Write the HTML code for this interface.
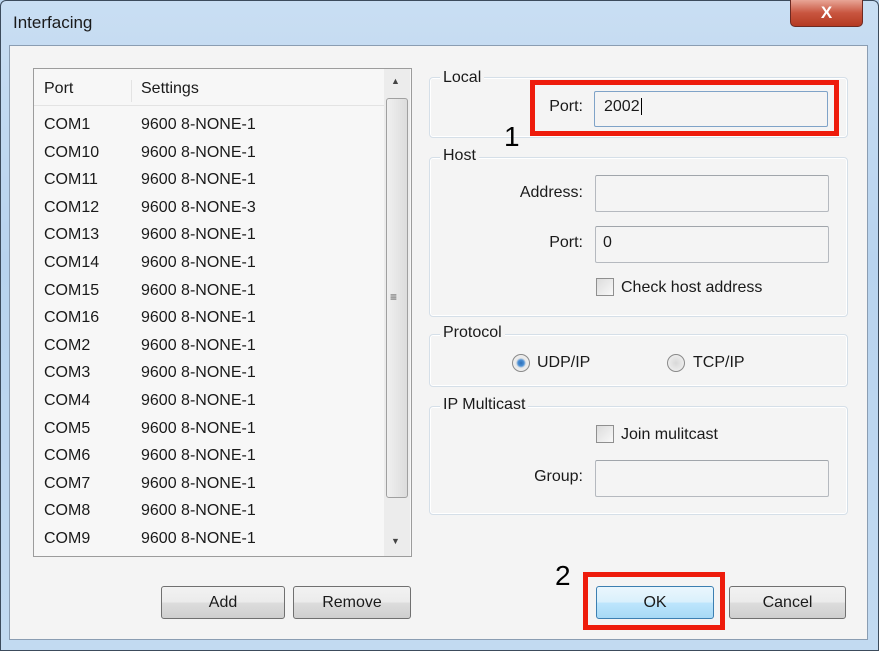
<!DOCTYPE html>
<html><head><style>
*{margin:0;padding:0;box-sizing:border-box}
body{width:879px;height:651px;overflow:hidden;position:relative;background:#bcd6ef;font-family:"Liberation Sans",sans-serif;font-size:16px;color:#1a1a1a}
.a{position:absolute}
.frame{left:0;top:0;width:879px;height:651px;border:1px solid #3c4b5c;border-radius:6px 6px 0 0;background:linear-gradient(180deg,#c9def3,#b8d3ee 40%,#c2daf1)}
.body{left:9px;top:45px;width:859px;height:595px;background:#f4f4f4;border:1px solid #8a9db2}
.grp{border:1px solid #d5dfe8;border-radius:4px;box-shadow:inset 0 0 0 1px #fff}
.gl{background:#f4f4f4;padding:0 3px;position:absolute;top:-11px;left:10px}
.inp{border:1px solid #b5b9bf;border-top-color:#a0a5ab;border-radius:2px;background:#f4f4f4}
.btn{border:1px solid #707070;border-radius:3px;background:linear-gradient(#f2f2f2,#ebebeb 50%,#dddddd 50%,#cfcfcf);text-align:center;line-height:30px}
.red{border:5px solid #ee1c0c}
.chk{width:18px;height:18px;border:1px solid #8f8f8f;background:linear-gradient(135deg,#dcdcdc,#f8f8f8)}
.lbl{position:absolute;text-align:right;width:120px}
</style></head><body>
<div class="a frame"></div>
<div class="a" style="left:13px;top:13px;font-size:17px">Interfacing</div>
<div class="a" style="left:790px;top:0;width:73px;height:27px;border:1px solid #6d2a22;border-top:none;border-radius:0 0 5px 5px;background:linear-gradient(#e8a596,#c8553f 50%,#b53a22);color:#fff;text-align:center;font-weight:bold;font-size:17px;line-height:26px">X</div>
<div class="a body"></div>

<div class="a" style="left:33px;top:68px;width:379px;height:489px;background:#f7f7f7;border:1px solid #9c9c9c"></div>
<div class="a" style="left:34px;top:105px;width:350px;height:1px;background:#e3e3e3"></div>
<div class="a" style="left:131px;top:80px;width:1px;height:22px;background:#e3e3e3"></div>
<div class="a" style="left:44px;top:80px">Port</div>
<div class="a" style="left:141px;top:80px">Settings</div>
<div class="a" style="left:384px;top:69px;width:26px;height:487px;background:#ececec"></div>
<div class="a" style="left:386px;top:98px;width:22px;height:400px;border:1px solid #a0a0a0;border-radius:3px;background:linear-gradient(90deg,#f0f0f0,#dcdcdc)"></div>
<div class="a" style="left:391px;top:76px;font-size:9px;color:#444">▲</div>
<div class="a" style="left:391px;top:536px;font-size:9px;color:#444">▼</div>
<div class="a" style="left:390px;top:290px;font-size:12px;color:#555">≡</div>
<div class="a" style="left:44px;top:111px;line-height:27.6px">COM1<br>COM10<br>COM11<br>COM12<br>COM13<br>COM14<br>COM15<br>COM16<br>COM2<br>COM3<br>COM4<br>COM5<br>COM6<br>COM7<br>COM8<br>COM9</div>
<div class="a" style="left:141px;top:111px;line-height:27.6px">9600 8-NONE-1<br>9600 8-NONE-1<br>9600 8-NONE-1<br>9600 8-NONE-3<br>9600 8-NONE-1<br>9600 8-NONE-1<br>9600 8-NONE-1<br>9600 8-NONE-1<br>9600 8-NONE-1<br>9600 8-NONE-1<br>9600 8-NONE-1<br>9600 8-NONE-1<br>9600 8-NONE-1<br>9600 8-NONE-1<br>9600 8-NONE-1<br>9600 8-NONE-1</div>

<div class="a grp" style="left:429px;top:77px;width:419px;height:61px"><span class="gl" style="top:-9px">Local</span></div>
<div class="a grp" style="left:429px;top:157px;width:419px;height:160px"><span class="gl">Host</span></div>
<div class="a grp" style="left:429px;top:334px;width:419px;height:53px"><span class="gl">Protocol</span></div>
<div class="a grp" style="left:429px;top:406px;width:419px;height:109px"><span class="gl">IP Multicast</span></div>

<div class="a red" style="left:530px;top:80px;width:309px;height:56px"></div>
<div class="lbl" style="left:463px;top:98px">Port:</div>
<div class="a inp" style="left:594px;top:91px;width:234px;height:36px;border-color:#7fa3c8"></div>
<div class="a" style="left:604px;top:98px">2002<span style="border-left:1px solid #000;margin-left:1px"></span></div>
<div class="a" style="left:504px;top:121px;font-size:28px;color:#000">1</div>

<div class="lbl" style="left:463px;top:184px">Address:</div>
<div class="a inp" style="left:595px;top:175px;width:234px;height:37px"></div>
<div class="lbl" style="left:463px;top:234px">Port:</div>
<div class="a inp" style="left:595px;top:226px;width:234px;height:37px"></div>
<div class="a" style="left:603px;top:234px">0</div>
<div class="a chk" style="left:596px;top:278px"></div>
<div class="a" style="left:621px;top:279px">Check host address</div>

<div class="a" style="left:512px;top:354px;width:18px;height:18px;border-radius:50%;border:1px solid #8a8a8a;background:radial-gradient(circle,#2d6fb8 0,#4b8fd4 3px,#e8e8e8 5px,#f5f5f5)"></div>
<div class="a" style="left:537px;top:354px">UDP/IP</div>
<div class="a" style="left:667px;top:354px;width:18px;height:18px;border-radius:50%;border:1px solid #8a8a8a;background:radial-gradient(circle,#d8d8d8,#f5f5f5)"></div>
<div class="a" style="left:693px;top:354px">TCP/IP</div>

<div class="a chk" style="left:596px;top:425px"></div>
<div class="a" style="left:621px;top:426px">Join mulitcast</div>
<div class="lbl" style="left:463px;top:468px">Group:</div>
<div class="a inp" style="left:595px;top:460px;width:234px;height:37px"></div>

<div class="a btn" style="left:161px;top:586px;width:124px;height:33px;line-height:32px">Add</div>
<div class="a btn" style="left:293px;top:586px;width:118px;height:33px;line-height:32px">Remove</div>
<div class="a" style="left:555px;top:560px;font-size:28px;color:#000">2</div>
<div class="a red" style="left:583px;top:572px;width:142px;height:58px"></div>
<div class="a btn" style="left:596px;top:586px;width:118px;height:33px;line-height:32px;border-color:#3c7fb1;background:linear-gradient(#eaf6fd,#d9f0fc 50%,#bee6fd 50%,#a7d9f5)">OK</div>
<div class="a btn" style="left:729px;top:586px;width:117px;height:33px;line-height:32px">Cancel</div>
</body></html>
